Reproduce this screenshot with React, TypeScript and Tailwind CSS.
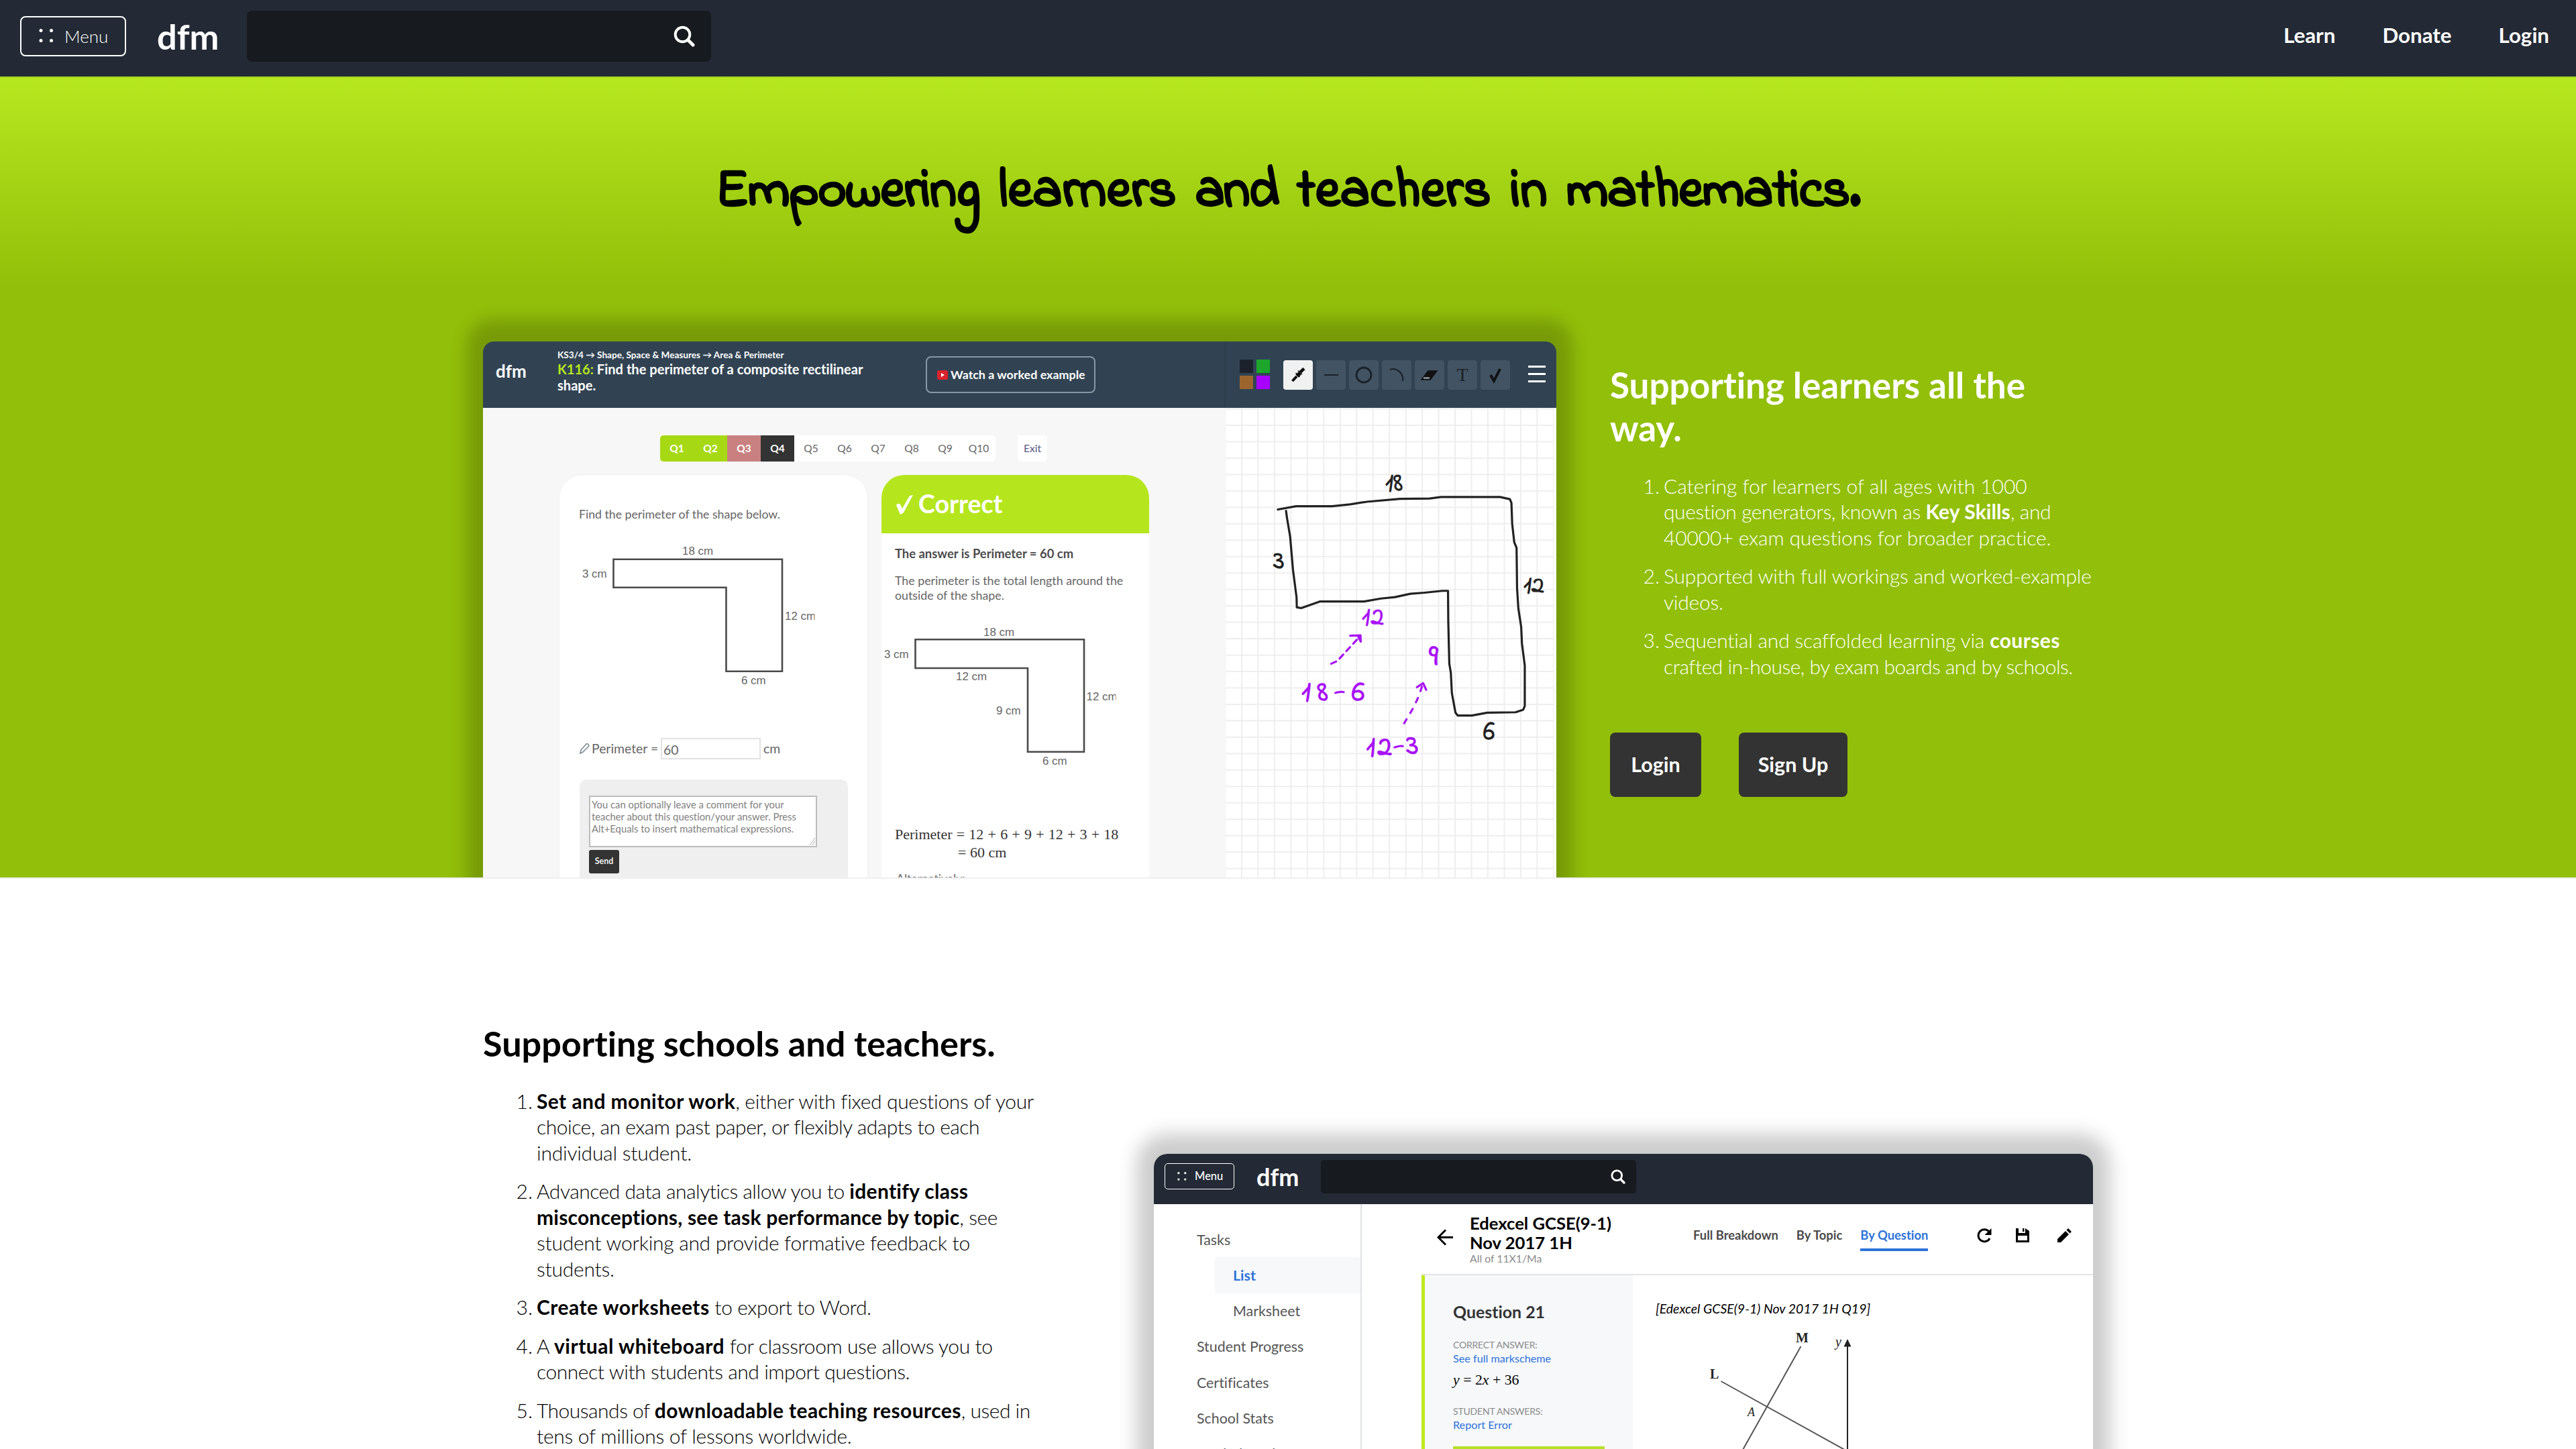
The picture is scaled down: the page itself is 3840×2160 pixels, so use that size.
import type { ReactNode } from "react";

function SearchIcon({ className }: { className: string }) {
  return (
    <svg viewBox="0 0 32 32" className={className} fill="none" stroke="white" strokeLinecap="round">
      <circle cx="13.5" cy="13.5" r="10.8" strokeWidth="4" />
      <path d="M22 22 L29 29" strokeWidth="5" />
    </svg>
  );
}

function Dots({ className }: { className: string }) {
  return (
    <svg viewBox="0 0 22 24" className={className} fill="white">
      <circle cx="3" cy="3.6" r="2.5" />
      <circle cx="18.5" cy="3.6" r="2.5" />
      <circle cx="3" cy="18.4" r="2.5" />
      <circle cx="18.5" cy="18.4" r="2.5" />
    </svg>
  );
}

function Line({ children, className = "" }: { children: ReactNode; className?: string }) {
  return <span className={"block whitespace-nowrap " + className}>{children}</span>;
}

function Item({ n, children }: { n: number; children: ReactNode }) {
  return (
    <li className="flex">
      <span className="w-20 shrink-0 pr-1.5 text-right">{n}.</span>
      <div>{children}</div>
    </li>
  );
}

function Header() {
  return (
    <header className="flex h-[114px] items-center bg-[#232a35] pb-1.5 pl-[30px] pr-10 text-white">
      <button className="flex h-[60px] w-[158px] items-center rounded-lg border-2 border-white pl-[26px] text-[26px] font-light">
        <Dots className="mr-4 h-6 w-[22px]" />
        Menu
      </button>
      <div className="ml-[46px] w-[134px] text-[52.500px] font-bold leading-[60px]">dfm</div>
      <div className="flex h-[76px] w-[692px] items-center justify-end rounded-lg bg-[#171a1e] pr-6">
        <SearchIcon className="h-8 w-8" />
      </div>
      <nav className="mb-[3px] ml-auto flex gap-[70px] text-[31.300px] font-bold">
        <a>Learn</a>
        <a>Donate</a>
        <a>Login</a>
      </nav>
    </header>
  );
}

const pending = ["Q5", "Q6", "Q7", "Q8", "Q9", "Q10"];

function Tool({ children, active = false }: { children: ReactNode; active?: boolean }) {
  return (
    <div className={active ? "flex size-11 items-center justify-center rounded bg-[#f1f1f1]" : "flex size-11 items-center justify-center rounded bg-[#425363]"}>
      <svg viewBox="0 0 44 44" className="size-11" fill="none" stroke="#1a2129" strokeWidth="2.2">
        {children}
      </svg>
    </div>
  );
}

function PracticeHeader() {
  return (
    <div className="flex h-[99px] bg-[#314353] text-white">
      <div className="flex w-[1107px] items-start border-r-2 border-[#2c3d4b]">
        <div className="ml-[19px] mt-7 w-[92px] text-[26px] font-bold leading-8">dfm</div>
        <div className="mt-[11px] w-[549px] font-bold">
          <p className="whitespace-nowrap text-[13.6px] leading-[18px]">KS3/4 → Shape, Space &amp; Measures → Area &amp; Perimeter</p>
          <p className="whitespace-nowrap text-[20.1px] leading-6">
            <span className="text-[#b5e61d]">K116:</span> Find the perimeter of a composite rectilinear
            <br />
            shape.
          </p>
        </div>
        <div className="mt-[22px] flex h-[55px] w-[253px] items-center whitespace-nowrap rounded-lg border-2 border-[#8a97a3] pl-[15px] text-[17.9px] font-bold">
          <svg viewBox="0 0 16 14" className="mr-1 h-3.5 w-4">
            <rect width="16" height="14" rx="2.5" fill="#d8232e" />
            <path d="M6 4 L11 7 L6 10 Z" fill="white" />
          </svg>
          Watch a worked example
        </div>
      </div>
      <div className="flex flex-1 items-start">
        <div className="ml-[21px] mt-[27px] grid grid-cols-[20px_20px] gap-x-[5px] gap-y-1">
          <div className="h-5 bg-[#1c222c]" />
          <div className="h-5 bg-[#1da62b]" />
          <div className="h-5 bg-[#9c652d]" />
          <div className="h-5 bg-[#a800ff]" />
        </div>
        <div className="ml-5 mt-7 flex gap-[5px]">
          <Tool active>
            <path d="M13.500 31 L20 24" strokeWidth="4" stroke="#111" />
            <path d="M20.500 23.500 L25 19" strokeWidth="6" stroke="#111" />
            <path d="M25 18 L31 12.500" strokeWidth="4.500" stroke="#111" />
            <path d="M18.500 19 L24.500 25 M22 15.500 L28 21" strokeWidth="1.500" stroke="#111" />
          </Tool>
          <Tool>
            <path d="M12 22 H33" />
          </Tool>
          <Tool>
            <circle cx="22" cy="22" r="11" strokeWidth="2.8" />
          </Tool>
          <Tool>
            <path d="M12 14 C22 10 33 20 31 31" />
          </Tool>
          <Tool>
            <path d="M10 29 L20 16 H33 L23 29 Z" fill="#111" stroke="#111" strokeWidth="1.5" />
            <path d="M13 26.5 H22" stroke="#8f9aa5" strokeWidth="2.5" />
          </Tool>
          <div className="flex size-11 items-center justify-center rounded bg-[#425363] font-['Liberation_Serif',serif] text-[28px] text-[#1a2129]">T</div>
          <Tool>
            <path d="M15 22 L20 31 L29 13" stroke="#111" strokeWidth="3.8" />
          </Tool>
        </div>
        <div className="ml-[27px] mt-9 flex flex-col gap-2">
          <div className="h-[3px] w-[26px] bg-white" />
          <div className="h-[3px] w-[26px] bg-white" />
          <div className="h-[3px] w-[26px] bg-white" />
        </div>
      </div>
    </div>
  );
}

function QuestionPanel() {
  return (
    <div className="h-[620px] w-[459px] rounded-t-[34px] bg-white pl-[29px] pt-12 text-[#666] shadow-[0_0_3px_rgba(0,0,0,0.06)]">
      <p className="text-[17.7px] leading-[22px]">Find the perimeter of the shape below.</p>
      <svg viewBox="863 778 410 322" className="h-[322px] w-[410px] font-['Liberation_Sans',sans-serif] text-[16.9px]" fill="#666">
        <path d="M914.5 833.7 H1166 V1000.7 H1082.5 V875.7 H914.5 Z" fill="none" stroke="#4a4a4a" strokeWidth="2.6" />
        <text x="1017" y="827">18 cm</text>
        <text x="868" y="861">3 cm</text>
        <svg x="1168" y="900" width="46.5" height="32" viewBox="1168 900 46.5 32">
          <text x="1170" y="924">12 cm</text>
        </svg>
        <text x="1105" y="1020">6 cm</text>
      </svg>
      <div className="flex h-8 items-center text-[19.4px]">
        <svg viewBox="0 0 17 18" className="mr-0.5 h-[18px] w-[17px]" fill="none" stroke="#7f8f95" strokeWidth="1.6">
          <path d="M2 16 L3 11 L11 2 C14 1 16 4 14 6 L6 14 Z" />
        </svg>
        <span className="w-[103px] whitespace-nowrap">Perimeter =</span>
        <div className="mr-1 flex h-8 w-[149px] items-center border-2 border-[#e2e2e2] pl-0.5 pt-1">60</div>
        cm
      </div>
      <div className="ml-px mt-[30px] h-[160px] w-[400px] rounded-t-[10px] bg-[#efefef] pl-3.5 pt-6">
        <div className="flex h-[77px] w-[340px] items-end border-2 border-[#bdbdbd] bg-white pl-0.5">
          <p className="mb-[17px] whitespace-nowrap text-[14.8px] leading-[18px] text-[#808080]">
            You can optionally leave a comment for your
            <br />
            teacher about this question/your answer. Press
            <br />
            Alt+Equals to insert mathematical expressions.
          </p>
          <svg viewBox="0 0 10 14" className="ml-auto h-3.5 w-2.5" stroke="#aaa" fill="none">
            <path d="M1 13 L9 2 M5 13 L9 7" />
          </svg>
        </div>
        <div className="mt-1 flex h-[35px] w-[45px] items-center justify-center rounded-[3px] bg-[#333] text-[12.500px] font-bold text-[#f0f0f0]">Send</div>
      </div>
    </div>
  );
}

function AnswerPanel() {
  return (
    <div className="h-[620px] w-[399px] overflow-hidden rounded-t-[34px] bg-white">
      <div className="flex h-[87px] items-center bg-[#b5e61d] pl-[21px] text-[37.500px] font-bold text-white">
        <svg viewBox="0 0 26 30" className="mr-2 h-[30px] w-[26px]" fill="white">
          <path d="M1 16 C3 12.500 7 13.500 8 17 L10 21 L21 2 L26 1 L12 27 L7 30 Z" />
        </svg>
        Correct
      </div>
      <div className="pl-5 text-[17.8px] leading-[22px] text-[#666]">
        <p className="mt-[19px] text-[18.400px] font-bold text-[#4c4c4c]">The answer is Perimeter = 60 cm</p>
        <p className="mt-[18px] whitespace-nowrap">
          The perimeter is the total length around the
          <br />
          outside of the shape.
        </p>
      </div>
      <svg viewBox="1314 898 399 332" className="h-[332px] w-[399px] font-['Liberation_Sans',sans-serif] text-[16.9px]" fill="#666">
        <path d="M1364.5 953.3 H1616 V1120.7 H1532 V996 H1364.5 Z" fill="none" stroke="#4a4a4a" strokeWidth="2.6" />
        <text x="1466" y="947.5">18 cm</text>
        <text x="1318" y="981">3 cm</text>
        <text x="1425" y="1014">12 cm</text>
        <svg x="1617" y="1020" width="46.5" height="32" viewBox="1617 1020 46.5 32">
          <text x="1619.500" y="1044">12 cm</text>
        </svg>
        <text x="1485" y="1065">9 cm</text>
        <text x="1554" y="1140">6 cm</text>
      </svg>
      <div className="pl-5 font-['Liberation_Serif',serif] text-[22px] leading-[27px] text-[#333]">
        <p className="whitespace-nowrap [word-spacing:0.7px]">Perimeter = 12 + 6 + 9 + 12 + 3 + 18</p>
        <p className="pl-[94px]">= 60 cm</p>
      </div>
      <p className="mt-[15px] pl-[22px] text-[17.6px] leading-[22px] text-[#666]">Alternatively:</p>
    </div>
  );
}

function Whiteboard() {
  return (
    <div className="flex-1 bg-white">
      <div className="h-[720px] w-[489px] bg-[linear-gradient(to_right,#eeeeee_2px,transparent_2px),linear-gradient(to_bottom,#eeeeee_2px,transparent_2px)] bg-[length:24.47px_24.47px] bg-[position:23px_25px]">
        <svg viewBox="1827 608 489 720" className="h-[720px] w-[489px]" fill="none" strokeLinecap="round" strokeLinejoin="round">
          <g transform="translate(1800 460) scale(.38265 .54855)" stroke="#222">
            <path vectorEffect="non-scaling-stroke" strokeWidth="3.2" d="M274 546 L345 537 L485 537 L555 532 L620 525 L750 517 L865 516 L910 512 L1140 512 L1178 518 L1184 528 L1187 585 L1195 635 L1204 650 L1206 760 L1211 815 L1222 865 L1225 910 L1236 970 L1236 1080 L1230 1090 L1200 1097 L1090 1098 L1030 1106 L975 1106 L966 1098 L952 1045 L948 990 L942 965 L938 850 L937 767 L915 767 L845 772 L790 775 L730 784 L675 788 L610 796 L437 796 L365 814 L348 812 L347 785 L333 710 L322 620 L310 570 L306 550" />
            <g stroke="#a913f5">
              <path vectorEffect="non-scaling-stroke" strokeWidth="3.2" strokeDasharray="8 7" d="M482 965 L505 958 L595 890" />
              <path vectorEffect="non-scaling-stroke" strokeWidth="3.2" d="M556 889 L596 888 L597 905 L588 893" />
              <path vectorEffect="non-scaling-stroke" strokeWidth="3.2" strokeDasharray="7 11" d="M766 1127 L802 1085 L822 1055 L838 1022" />
              <path vectorEffect="non-scaling-stroke" strokeWidth="3.2" d="M816 1029 L840 1018 L852 1036" />
            </g>
          </g>
          <g fill="#222" className="font-['Indie_Flower',cursive] text-[38px] font-bold">
            <text x="2065" y="731" textLength="26" lengthAdjust="spacingAndGlyphs" className="text-[40px]">18</text>
            <text x="1898" y="847" className="text-[40px]">3</text>
            <text x="2271" y="883" textLength="31" lengthAdjust="spacingAndGlyphs" className="text-[36px]">12</text>
            <text x="2211" y="1102" textLength="17" lengthAdjust="spacingAndGlyphs" className="text-[42px]">6</text>
          </g>
          <g fill="#a913f5" className="font-['Indie_Flower',cursive] text-[44px] font-bold">
            <text x="2030" y="931" textLength="33" className="text-[39px]">12</text>
            <text x="2130" y="991" className="text-[46px]">9</text>
            <text x="1940" y="1044" textLength="94">18-6</text>
            <text x="2037" y="1127" textLength="78" transform="rotate(-3 2038 1128)">12-3</text>
          </g>
        </svg>
      </div>
    </div>
  );
}

function PracticeCard() {
  return (
    <div className="h-[820px] w-[1600px] shrink-0 rounded-t-2xl shadow-[0_-8px_24px_25px_rgba(0,0,0,0.19)]">
      <div className="h-full overflow-hidden rounded-t-2xl">
        <PracticeHeader />
        <div className="flex">
          <div className="h-[721px] w-[1107px] bg-[#f7f7f7]">
            <div className="flex pl-[264px] pt-[41px] text-[15.500px] text-[#666]">
              <div className="flex h-[39px] overflow-hidden rounded-[5px] bg-white">
                <span className="flex w-[50px] items-center justify-center bg-[#a6d914] font-bold text-white">Q1</span>
                <span className="flex w-[50px] items-center justify-center bg-[#a6d914] font-bold text-white">Q2</span>
                <span className="flex w-[50px] items-center justify-center bg-[#c98080] font-bold text-white">Q3</span>
                <span className="flex w-[50px] items-center justify-center bg-[#333] font-bold text-white">Q4</span>
                {pending.map((q) => (
                  <span key={q} className="flex w-[50px] items-center justify-center">{q}</span>
                ))}
              </div>
              <div className="ml-[33px] flex h-[39px] w-11 items-center justify-center rounded-[5px] bg-white text-[#55557f]">Exit</div>
            </div>
            <div className="mt-5 flex gap-[21px] pl-[114px]">
              <QuestionPanel />
              <AnswerPanel />
            </div>
          </div>
          <Whiteboard />
        </div>
      </div>
    </div>
  );
}

function Hero() {
  return (
    <section className="h-[1194px] overflow-hidden border-t-2 border-[#a6d420] bg-[#92bf09] bg-[linear-gradient(#b6e81f,#92bf09_314px)]">
      <h1 className="pt-[126px] text-center font-['Indie_Flower',cursive] text-[80px] font-bold leading-[90px] text-black [-webkit-text-stroke:2px_black] [font-kerning:none] [word-spacing:8px]">
        <span className="tracking-[-0.5px]">Empowering</span> <span className="tracking-[0.9px]">learners</span>{" "}
        <span className="tracking-[-1.5px]">and</span> <span className="tracking-[1.2px]">teachers</span>{" "}
        <span className="tracking-[0.8px]">in</span> <span className="tracking-[-0.6px]">mathematics.</span>
      </h1>
      <div className="ml-[720px] mt-[177px] flex w-[2400px] items-start gap-20">
        <PracticeCard />
        <div className="mt-[33px] text-white">
          <h2 className="text-[53px] font-bold leading-[64px]">
            Supporting learners all the
            <br />
            way.
          </h2>
          <ol className="mt-[35px] flex flex-col gap-[19.2px] text-[30px] font-light leading-[38.4px]">
            <Item n={1}>
              <Line className="tracking-[-0.03px]">Catering for learners of all ages with 1000</Line>
              <Line className="tracking-[-0.4px]">question generators, known as <b className="font-bold tracking-[0.1px]">Key Skills</b>, and</Line>
              <Line className="tracking-[-0.12px]">40000+ exam questions for broader practice.</Line>
            </Item>
            <Item n={2}>
              <Line className="tracking-[-0.2px]">Supported with full workings and worked-example</Line>
              <Line className="tracking-[-0.25px]">videos.</Line>
            </Item>
            <Item n={3}>
              <Line className="tracking-[-0.2px]">Sequential and scaffolded learning via <b className="font-bold tracking-[0.4px]">courses</b></Line>
              <Line className="tracking-[-0.51px]">crafted in-house, by exam boards and by schools.</Line>
            </Item>
          </ol>
          <div className="mt-20 flex gap-14 text-[30.500px] font-bold">
            <button className="h-24 w-[136px] rounded-lg bg-[#333]">Login</button>
            <button className="h-24 w-[162px] rounded-lg bg-[#333]">Sign Up</button>
          </div>
        </div>
      </div>
    </section>
  );
}

function SideLink({ children }: { children: ReactNode }) {
  return <div className="flex h-[53.3px] items-center pl-16">{children}</div>;
}

function ReportCard() {
  return (
    <div className="h-[460px] w-[1400px] shrink-0 rounded-t-[20px] shadow-[0_-4px_28px_26px_rgba(0,0,0,0.2)]">
      <div className="h-full overflow-hidden rounded-t-[20px] bg-white">
        <div className="flex h-[75px] items-center bg-[#232a35] pb-2 pl-4 text-white">
          <div className="flex h-[39px] w-[104px] items-center rounded-[5px] border-[1.500px] border-white pl-[18px] text-[16.500px] font-medium">
            <Dots className="mr-3 h-4 w-[14px]" />
            Menu
          </div>
          <div className="ml-[33px] w-24 text-[36px] font-bold leading-10">dfm</div>
          <div className="flex h-[50px] w-[470px] items-center justify-end rounded-[5px] bg-[#171a1e] pr-4">
            <SearchIcon className="size-[22px]" />
          </div>
        </div>
        <div className="flex h-[385px]">
          <aside className="w-[310px] shrink-0 border-r-2 border-[#dfe1e4] pt-[26px] text-[21.400px] text-[#555]">
            <SideLink>Tasks</SideLink>
            <div className="ml-[91px] flex h-[53.3px] items-center bg-[#f6f8fa] pl-[27px] font-bold text-[#2d72d9]">List</div>
            <div className="ml-[91px] flex h-[53.3px] items-center pl-[27px]">Marksheet</div>
            <SideLink>Student Progress</SideLink>
            <SideLink>Certificates</SideLink>
            <SideLink>School Stats</SideLink>
            <SideLink>Leaderboard</SideLink>
          </aside>
          <div className="flex-1 pl-[89px]">
            <div className="flex h-[106px] items-start border-b-2 border-[#e4e4e4] pt-[14px]">
              <svg viewBox="0 0 25 25" className="ml-[23px] mt-[23px] size-[25px]" fill="none" stroke="black" strokeWidth="3">
                <path d="M24 12.500 H2 M13 1.500 L2 12.500 L13 23.500" />
              </svg>
              <div className="ml-6 w-[333px] whitespace-nowrap">
                <h3 className="text-[25.600px] font-bold leading-[28.700px] text-black">
                  Edexcel GCSE(9-1)
                  <br />
                  Nov 2017 1H
                </h3>
                <p className="text-[15.800px] leading-[19px] text-[#8a8a8a]">All of 11X1/Ma</p>
              </div>
              <div className="mt-5 flex gap-[27px] whitespace-nowrap text-[18.400px] font-bold leading-6 text-[#4a4a4a]">
                <span>Full Breakdown</span>
                <span>By Topic</span>
                <span className="border-b-4 border-[#2d72d9] pb-2 text-[#2d72d9]">By Question</span>
              </div>
              <svg viewBox="0 0 23 22" className="ml-auto mt-[22px] h-[22px] w-[23px]" fill="none" stroke="black" strokeWidth="3">
                <path d="M19 5 A9 9 0 1 0 20 15" />
                <path d="M22.500 0 V10 H12.500 Z" fill="black" stroke="none" />
              </svg>
              <svg viewBox="0 0 20 21" className="ml-9 mt-[22px] h-[21px] w-5">
                <path d="M0 0 H4 V7 H14 V0 L20 4 V21 H0 Z M3 11 V18 H17 V11 Z" fill="black" fillRule="evenodd" />
                <rect x="10" y="0" width="2.500" height="5" fill="black" />
              </svg>
              <svg viewBox="0 0 21 21" className="ml-[42px] mr-8 mt-[22px] size-[21px]" fill="black">
                <path d="M0 21 V16 L12 4 L17 9 L5 21 Z M13.500 2.500 L16 0 L21 5 L18.500 7.500 Z" />
              </svg>
            </div>
            <div className="flex h-[290px]">
              <div className="w-[315px] shrink-0 border-l-[5px] border-[#bfe81c] bg-[#f6f8fa] pl-[42px] pt-[39px] text-[16.200px] leading-5 text-[#2d72d9]">
                <h4 className="text-[24.900px] font-bold leading-[30px] text-[#333]">Question 21</h4>
                <p className="mt-[25px] whitespace-nowrap text-[14px] tracking-[-0.2px] text-[#8a8a8a]">CORRECT ANSWER:</p>
                <p>See full markscheme</p>
                <p className="mt-2.5 font-['Liberation_Serif',serif] text-[21.800px] leading-6 text-black">
                  <i>y</i> = 2<i>x</i> + 36
                </p>
                <p className="mt-[25px] whitespace-nowrap text-[14px] tracking-[-0.2px] text-[#8a8a8a]">STUDENT ANSWERS:</p>
                <p>Report Error</p>
                <div className="mt-[22px] h-20 w-[226px] bg-[#b5e028]" />
              </div>
              <div>
                <p className="ml-[34px] mt-[38px] text-[19.500px] italic leading-6 text-black">[Edexcel GCSE(9-1) Nov 2017 1H Q19]</p>
                <svg viewBox="2434 1963 686 230" className="h-[230px] w-[686px] font-['Liberation_Serif',serif]" stroke="#555" strokeWidth="2" fill="none">
                  <path d="M2754 2000 V2193" stroke="#222" />
                  <path d="M2754 1996 L2748.500 2007.500 H2759.500 Z" fill="#222" stroke="none" />
                  <path d="M2684.500 2007 L2584.600 2185" />
                  <path d="M2565.500 2059 L2802 2190" />
                  <g fill="#222" stroke="none" className="text-[20px]">
                    <text x="2677" y="2000.500" className="font-bold">M</text>
                    <text x="2549" y="2055" className="font-bold">L</text>
                    <text x="2736" y="2007" className="italic">y</text>
                    <text x="2605" y="2110.500" className="text-[18px] italic">A</text>
                  </g>
                </svg>
              </div>
            </div>
          </div>
        </div>
      </div>
    </div>
  );
}

function Schools() {
  return (
    <section className="flex h-[852px] items-start overflow-hidden border-t-2 border-[#efefef] bg-white pl-[720px] text-black">
      <div className="w-[1000px] pt-[213px]">
        <h2 className="text-[52.200px] font-bold leading-[64px]">Supporting schools and teachers.</h2>
        <ol className="mt-[35px] flex flex-col gap-[19.2px] text-[30px] font-light leading-[38.4px]">
          <Item n={1}>
            <Line className="tracking-[-0.32px]"><b className="font-bold tracking-[0.42px]">Set and monitor work</b>, either with fixed questions of your</Line>
            <Line className="tracking-[-0.48px]">choice, an exam past paper, or flexibly adapts to each</Line>
            <Line className="tracking-[-0.25px]">individual student.</Line>
          </Item>
          <Item n={2}>
            <Line className="tracking-[-0.48px]">Advanced data analytics allow you to <b className="font-bold tracking-[0.3px]">identify class</b></Line>
            <Line className="tracking-[-0.4px]"><b className="font-bold tracking-[0.2px]">misconceptions, see task performance by topic</b>, see</Line>
            <Line className="tracking-[-0.29px]">student working and provide formative feedback to</Line>
            <Line className="tracking-[-0.25px]">students.</Line>
          </Item>
          <Item n={3}>
            <Line className="tracking-[-0.4px]"><b className="font-bold tracking-[0.45px]">Create worksheets</b> to export to Word.</Line>
          </Item>
          <Item n={4}>
            <Line className="tracking-[-0.4px]">A <b className="font-bold tracking-[0.5px]">virtual whiteboard</b> for classroom use allows you to</Line>
            <Line className="tracking-[-0.44px]">connect with students and import questions.</Line>
          </Item>
          <Item n={5}>
            <Line className="tracking-[-0.5px]">Thousands of <b className="font-bold tracking-[0.4px]">downloadable teaching resources</b>, used in</Line>
            <Line className="tracking-[-0.28px]">tens of millions of lessons worldwide.</Line>
          </Item>
        </ol>
      </div>
      <div className="pt-[410px]">
        <ReportCard />
      </div>
    </section>
  );
}

export default function App() {
  return (
    <div className="h-[2160px] w-[3840px] overflow-hidden bg-white font-[Lato,sans-serif] [font-variant-ligatures:none]">
      <Header />
      <Hero />
      <Schools />
    </div>
  );
}
